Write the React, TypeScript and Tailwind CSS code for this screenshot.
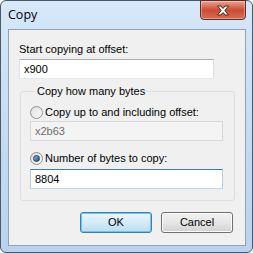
import { useState } from "react";

const Radio = ({ checked }: { checked: boolean }) => (
  <span className="relative flex h-[13px] w-[13px] shrink-0 items-center justify-center rounded-full border border-[#8e8f8f] bg-gradient-to-br from-[#dcdcdc] to-[#fbfbfb]">
    <span className="h-[9px] w-[9px] rounded-full bg-gradient-to-br from-[#e6e6e6] to-[#f4f4f4]" />
    {checked && (
      <span className="absolute left-[2px] top-[2px] h-[7px] w-[7px] rounded-full border border-[#1c3c5c] bg-gradient-to-br from-[#8fb9e1] to-[#1f4f86]" />
    )}
  </span>
);

const Dialog = () => {
  const [offset, setOffset] = useState("x900");
  const [count, setCount] = useState("8804");

  return (
    <div
      className="flex h-[253px] w-[253px] flex-col rounded-[6px] border border-[#4b5a6a] bg-gradient-to-b from-[#d6e8f9] via-[#c5dcf2] to-[#b9d3ee] text-[11px] text-black"
      style={{ fontFamily: '"Liberation Sans", Arial, sans-serif' }}
    >
      {/* title bar */}
      <div className="flex h-[28px] items-start justify-between pl-[7px] pr-[6px]">
        <span
          className="mt-[6px] text-[12.5px] leading-[16px] text-black"
          style={{ fontFamily: '"Open Sans", "Noto Sans", sans-serif' }}
        >
          Copy
        </span>
        <button className="-mt-[1px] flex h-[20px] w-[46px] items-center justify-center rounded-b-[4px] border border-[#5b2b24] bg-gradient-to-b from-[#e8a495] via-[#cc4a33] to-[#d66c52] shadow-[inset_0_0_0_1px_rgba(255,255,255,0.35)]">
          <svg width="14" height="11" viewBox="0 0 14 11">
            <path
              d="M1.5 1 H5 L7 3.5 L9 1 H12.5 L8.8 5.5 L12.5 10 H9 L7 7.5 L5 10 H1.5 L5.2 5.5 Z"
              fill="#ffffff"
              stroke="#4a2a26"
              strokeWidth="1"
              strokeLinejoin="round"
            />
          </svg>
        </button>
      </div>

      {/* client area */}
      <div className="ml-[7px] flex h-[217px] w-[238px] flex-col border border-[#8fa1b4] bg-[#f0f0f0] pl-[10px]">
        <label className="mt-[12px] leading-[14px]">Start copying at offset:</label>
        <input
          value={offset}
          onChange={(e) => setOffset(e.target.value)}
          className="mt-[3px] h-[20px] w-[195px] border border-[#abadb3] border-r-[#dbdfe6] border-b-[#e3e9ef] border-l-[#e2e3ea] bg-white px-[4px] text-[11px] outline-none"
          style={{ fontFamily: '"Liberation Sans", Arial, sans-serif' }}
        />

        <fieldset className="ml-[1px] mt-[5px] h-[117px] w-[215px] rounded-[3px] border border-[#d5dfe5] pl-[9px]">
          <legend className="ml-[5px] px-[2px] leading-[14px]">Copy how many bytes</legend>
          <div className="mt-[7px] flex items-center gap-[2px]">
            <Radio checked={false} />
            <span className="leading-[14px]">Copy up to and including offset:</span>
          </div>
          <div className="mt-[2px] flex h-[20px] w-[193px] items-center border border-[#d9d9d9] bg-[#f4f4f4] px-[4px] text-[#6d6d6d]">
            x2b63
          </div>
          <div className="mt-[10px] flex items-center gap-[2px]">
            <Radio checked={true} />
            <span className="leading-[14px]">Number of bytes to copy:</span>
          </div>
          <input
            value={count}
            onChange={(e) => setCount(e.target.value)}
            className="mt-[4px] h-[20px] w-[193px] border border-[#3d7bad] border-b-[#b7d9ed] border-l-[#b5cfe7] border-r-[#b5cfe7] bg-white px-[4px] text-[11px] outline-none"
            style={{ fontFamily: '"Liberation Sans", Arial, sans-serif' }}
          />
        </fieldset>

        <div className="mt-[11px] flex gap-[9px] pl-[61px]">
          <button className="h-[21px] w-[72px] rounded-[3px] border border-[#3c7fb1] bg-gradient-to-b from-[#ecf6fc] via-[#d5ebf8] to-[#b9dcf2] shadow-[inset_0_0_0_1px_#6cc6f2] text-[11px]">
            OK
          </button>
          <button className="h-[21px] w-[72px] rounded-[3px] border border-[#707070] bg-gradient-to-b from-[#f2f2f2] via-[#e6e6e6] to-[#d2d2d2] shadow-[inset_0_0_0_1px_#fbfbfb] text-[11px]">
            Cancel
          </button>
        </div>
      </div>
    </div>
  );
};

export default function App() {
  return <Dialog />;
}
